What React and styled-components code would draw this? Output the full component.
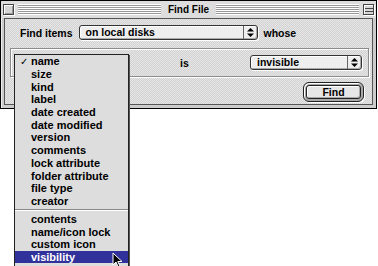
import React from 'react'
import styled, { createGlobalStyle } from 'styled-components'

const GlobalStyle = createGlobalStyle`
	html, body {
		margin: 0;
		padding: 0;
		background: #ffffff;
	}
	body {
		font-family: "Liberation Sans", Arial, sans-serif;
	}
`

const dither = 'repeating-conic-gradient(#d2d2d2 0 25%, #e6e6e6 0 50%) 0 0 / 2px 2px'

const fields = [
	'name', 'size', 'kind', 'label', 'date created', 'date modified', 'version',
	'comments', 'lock attribute', 'folder attribute', 'file type', 'creator',
]
const extras = ['contents', 'name/icon lock', 'custom icon', 'visibility']

const Arrows = () => (
	<svg width="7" height="9" viewBox="0 0 7 9">
		<path d="M3.5 0 L7 3.5 L0 3.5 Z" fill="#000" />
		<path d="M0 5.5 L7 5.5 L3.5 9 Z" fill="#000" />
	</svg>
)

const Popup = ({ width, children }) => (
	<PopupBase $width={width}>
		<span className="value">{children}</span>
		<span className="arrows"><Arrows /></span>
	</PopupBase>
)

const Cursor = () => (
	<CursorBase width="11" height="17" viewBox="0 0 11 17">
		<path d="M1 1 L1 13 L4 10 L6.2 15 L8 14.2 L5.8 9.5 L10 9.5 Z" fill="#000" stroke="#fff" strokeWidth="1" />
	</CursorBase>
)

export default function App() {
	return (
		<Page>
			<GlobalStyle />
			<Window>
				<TitleBar>
					<CloseBox />
					<Stripes />
					<Title>Find File</Title>
					<Stripes />
					<CollapseBox />
				</TitleBar>
				<Content>
					<TopRow>
						<Label>Find items</Label>
						<Popup width={179}>on local disks</Popup>
						<Label>whose</Label>
					</TopRow>
					<GroupBox>
						{/* popup opened below, its menu covers it */}
						<Popup width={115} />
						<IsLabel>is</IsLabel>
						<Popup width={112}>invisible</Popup>
					</GroupBox>
					<ButtonRow>
						<DefaultRing>
							<Button>Find</Button>
						</DefaultRing>
					</ButtonRow>
				</Content>
			</Window>
			<Menu>
				{fields.map((f, i) => (
					<MenuItem key={f}>
						<Check>{i === 0 ? '✓' : ''}</Check>
						<span>{f}</span>
					</MenuItem>
				))}
				<Separator />
				{extras.map(f => (
					<MenuItem key={f} $active={f === 'visibility'}>
						<Check />
						<span>{f}</span>
					</MenuItem>
				))}
				<MenuItem />
			</Menu>
			<Cursor />
		</Page>
	)
}

const Page = styled.div`
	position: relative;
	width: 378px;
	height: 266px;
	overflow: hidden;
	background: #ffffff;
`

const Window = styled.div`
	width: 377px;
	box-sizing: border-box;
	border: 1px solid #000;
	background: #cccccc;
	display: flex;
	flex-direction: column;
	box-shadow: inset 1px 1px 0 #eeeeee;
`

const TitleBar = styled.div`
	height: 17px;
	display: flex;
	align-items: center;
	padding: 0 2px 0 2px;
	gap: 4px;
	background: #dddddd;
`

const CloseBox = styled.div`
	width: 9px;
	height: 9px;
	border: 1px solid #444;
	background: #d6d6d6;
	box-shadow: inset 1px 1px 0 #ffffff, inset -1px -1px 0 #999999, 1px 1px 0 #ffffff;
	flex: none;
`

const CollapseBox = styled.div`
	width: 9px;
	height: 9px;
	border: 1px solid #444;
	background: linear-gradient(#d6d6d6 0 3px, #444 3px 4px, #d6d6d6 4px 6px, #444 6px 7px, #d6d6d6 7px);
	box-shadow: inset 1px 1px 0 #ffffff, 1px 1px 0 #ffffff;
	flex: none;
`

const Stripes = styled.div`
	flex: 1;
	height: 11px;
	background: repeating-linear-gradient(to bottom, #ffffff 0 1px, #9a9a9a 1px 2px);
`

const Title = styled.div`
	font-size: 10px;
	font-weight: bold;
	color: #000;
	padding: 0 3px;
	line-height: 17px;
`

const Content = styled.div`
	margin: 0 3px 3px 3px;
	border: 1px solid #555555;
	background: ${dither};
	padding: 6px 0 2px 0;
	display: flex;
	flex-direction: column;
`

const TopRow = styled.div`
	display: flex;
	align-items: center;
	gap: 6px;
	padding-left: 15px;
	height: 15px;
`

const Label = styled.span`
	font-size: 10.5px;
	font-weight: bold;
	color: #000;
	white-space: nowrap;
`

const PopupBase = styled.div`
	width: ${p => p.$width}px;
	height: 15px;
	box-sizing: border-box;
	border: 1px solid #333;
	border-radius: 3px;
	background: #eeeeee;
	box-shadow: inset 1px 1px 0 #ffffff, inset -1px -1px 0 #aaaaaa, 1px 1px 0 #ffffff;
	display: flex;
	align-items: stretch;
	flex: none;
	.value {
		flex: 1;
		font-size: 10.5px;
		font-weight: bold;
		color: #000;
		padding-left: 6px;
		line-height: 13px;
		white-space: nowrap;
		overflow: hidden;
	}
	.arrows {
		width: 13px;
		border-left: 1px solid #666;
		display: flex;
		align-items: center;
		justify-content: center;
	}
`

const GroupBox = styled.div`
	margin: 8px 3px 0 5px;
	height: 27px;
	border: 1px solid #8c8c8c;
	box-shadow: inset 1px 1px 0 #ffffff, 1px 1px 0 #ffffff;
	display: flex;
	align-items: center;
	padding: 0 6px 0 3px;
`

const IsLabel = styled(Label)`
	margin-left: 51px;
	margin-right: auto;
`

const ButtonRow = styled.div`
	display: flex;
	justify-content: flex-end;
	padding: 5px 8px 0 0;
`

const DefaultRing = styled.div`
	width: 61px;
	height: 20px;
	box-sizing: border-box;
	border: 1px solid #222;
	border-radius: 6px;
	background: #a9a9a9;
	box-shadow: inset 1px 1px 0 #ffffff, 1px 1px 0 #ffffff;
	padding: 2px;
	display: flex;
`

const Button = styled.div`
	flex: 1;
	border: 1px solid #222;
	border-radius: 3px;
	background: #e6e6e6;
	box-shadow: inset 1px 1px 0 #ffffff, inset -1px -1px 0 #aaaaaa;
	font-size: 10.5px;
	font-weight: bold;
	color: #000;
	text-align: center;
	line-height: 12px;
`

const Menu = styled.div`
	position: absolute;
	left: 14px;
	top: 54px;
	width: 115px;
	box-sizing: border-box;
	border: 1px solid #222;
	background: #dddddd;
	box-shadow: 1px 1px 0 #555555;
`

const MenuItem = styled.div`
	display: flex;
	align-items: center;
	height: 12.7px;
	font-size: 11px;
	font-weight: bold;
	white-space: nowrap;
	color: ${p => (p.$active ? '#ffffff' : '#000000')};
	background: ${p => (p.$active ? '#31319c' : 'transparent')};
`

const Check = styled.span`
	width: 16px;
	flex: none;
	box-sizing: border-box;
	padding-left: 5px;
	font-family: "DejaVu Sans", sans-serif;
	font-size: 10px;
	font-weight: bold;
`

const Separator = styled.div`
	height: 5.3px;
	display: flex;
	flex-direction: column;
	justify-content: center;
	&::before {
		content: "";
		height: 1px;
		background: #8a8a8a;
	}
	&::after {
		content: "";
		height: 1px;
		background: #ffffff;
	}
`

const CursorBase = styled.svg`
	position: absolute;
	left: 112px;
	top: 252px;
`
